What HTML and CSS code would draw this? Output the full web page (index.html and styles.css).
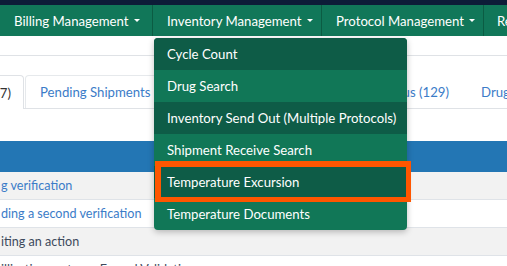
FILE: index.html
```html
<!DOCTYPE html>
<html>
<head>
<meta charset="utf-8">
<link rel="stylesheet" href="styles.css">
</head>
<body>
<div class="topbar"></div>
<nav class="nav">
  <div class="nav-item w1">Billing Management<span class="caret"></span></div>
  <div class="nav-item w2">Inventory Management<span class="caret"></span></div>
  <div class="nav-item w3">Protocol Management<span class="caret"></span></div>
  <div class="nav-item w4">Re</div>
</nav>
<main class="main">
  <div class="header"></div>
  <div class="tabs">
    <div class="tab active">(7)</div>
    <div class="tab bordered">Pending Shipments (12)</div>
    <div class="tab status">Status (129)</div>
    <div class="tab">Drug Returns</div>
  </div>
  <div class="table">
    <div class="thead"></div>
    <div class="row gray link">g verification</div>
    <div class="row link">ding a second verification</div>
    <div class="row gray">iting an action</div>
    <div class="row">illization system - Forced Validation</div>
  </div>

  <div class="dropdown">
    <div class="dd-item dark">Cycle Count</div>
    <div class="dd-item">Drug Search</div>
    <div class="dd-item dark">Inventory Send Out (Multiple Protocols)</div>
    <div class="dd-item">Shipment Receive Search</div>
    <div class="dd-item dark">Temperature Excursion</div>
    <div class="dd-item">Temperature Documents</div>
  </div>
  <div class="highlight"></div>
</main>
</body>
</html>
```

FILE: styles.css
```css
* { box-sizing: border-box; }
html, body {
  margin: 0;
  padding: 0;
  width: 507px;
  height: 266px;
  overflow: hidden;
  background: #fff;
  font-family: Lato, "Open Sans", sans-serif;
}
.topbar {
  height: 5px;
  background: #0d1c38;
}
.nav {
  display: flex;
  height: 31px;
  background: #117759;
  color: #fff;
  font-size: 13.2px;
  white-space: nowrap;
}
.nav-item {
  display: flex;
  align-items: center;
  padding: 0 14px;
  border-right: 1px solid #0b5c43;
  flex: none;
}
.w1 { width: 153px; }
.w2 { width: 169px; }
.w3 { width: 162px; }
.w4 { border-right: none; padding-left: 13px; }
.caret {
  display: inline-block;
  margin-left: 5px;
  border-left: 3.5px solid transparent;
  border-right: 3.5px solid transparent;
  border-top: 3.5px solid #fff;
}
.main {
  position: relative;
}
.header {
  height: 20px;
  border-bottom: 1px solid #dfe2e6;
}
.tabs {
  display: flex;
  margin-top: 19px;
  height: 34px;
  border-bottom: 1px solid #dfe2e6;
  font-size: 13.2px;
  white-space: nowrap;
}
.tab {
  padding: 0 15px;
  display: flex;
  align-items: center;
  color: #3b7cc8;
  flex: none;
  border: 1px solid transparent;
  border-bottom: none;
  border-radius: 4px 4px 0 0;
}
.tab.active {
  color: #333;
  margin-left: -17px;
  width: 41px;
  padding: 0 12px 0 0;
  justify-content: flex-end;
  border-color: #dfe2e6;
  border-left: none;
  background: #fff;
  margin-bottom: -1px;
  height: 34px;
}
.tab.bordered {
  margin-left: 1px;
  padding-left: 14px;
  border-color: #e6e9ec;
  width: 183px;
}
.tab.status {
  width: 257px;
  justify-content: flex-end;
}
.table {
  margin-top: 32px;
  font-size: 12.6px;
}
.thead {
  height: 31px;
  background: #2376b4;
}
.row {
  height: 28px;
  display: flex;
  align-items: center;
  padding-left: 1px;
  color: #3d4a5c;
  border-bottom: 1px solid #dfe3e8;
  white-space: nowrap;
}
.row.gray { background: #f2f2f2; }
.row.link { color: #3b7cc8; }
.dropdown {
  position: absolute;
  left: 154px;
  top: 2px;
  width: 253px;
  border-radius: 4px;
  overflow: hidden;
  box-shadow: 0 2px 6px rgba(0,0,0,0.25);
  font-size: 13.2px;
  color: #fff;
  background: #117757;
}
.dd-item {
  height: 32px;
  display: flex;
  align-items: center;
  padding-left: 13px;
  white-space: nowrap;
}
.dd-item.dark { background: #0e5c47; }
.highlight {
  position: absolute;
  left: 155px;
  top: 125px;
  width: 256px;
  height: 41px;
  border: 6px solid #ff5600;
  border-right-width: 5px;
  border-bottom-width: 5px;
}
```
